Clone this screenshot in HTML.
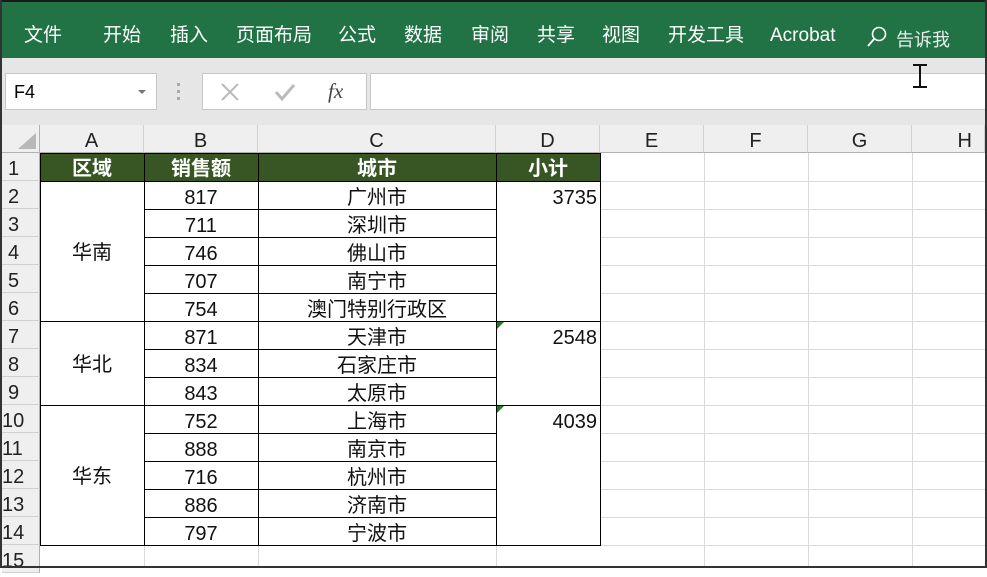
<!DOCTYPE html><html><head><meta charset="utf-8"><style>
*{margin:0;padding:0;box-sizing:border-box}
body{width:987px;height:568px;overflow:hidden;background:#fff;position:relative;font-family:"Liberation Sans","Noto Sans CJK SC",sans-serif}
.a{position:absolute}
.rib{left:0;top:0;width:987px;height:58px;background:#217346;border:2px solid #1a1a1a;border-bottom:none}
.rib span{position:absolute;top:22px;color:#fff;font-size:19px;line-height:24px}
.tb{left:0;top:58px;width:987px;height:67px;background:#e6e6e6}
.box{background:#fff;border:1px solid #c6c6c6}
.ch{top:125px;height:28px;background:#efefef;border-right:1px solid #d0d0d0;border-bottom:1px solid #b0b0b0;text-align:center;font-size:20px;line-height:32px;color:#222}
.rh{left:2px;width:38px;height:28px;background:#efefef;border-bottom:1px solid #d0d0d0;border-right:1px solid #b0b0b0;font-size:20px;line-height:32px;color:#222;padding-left:6px}
.gv{top:153px;width:1px;height:415px;background:#d9d9d9}
.gh{left:40px;width:945px;height:1px;background:#d9d9d9}
.bv{top:153px;width:1px;height:393px;background:#000}
.bh{height:1px;background:#000}
.t{font-size:20px;line-height:32px;text-align:center;color:#111}
</style></head><body>
<div class="a rib">
<span style="left:22px">文件</span><span style="left:101px">开始</span><span style="left:168px">插入</span><span style="left:234px">页面布局</span><span style="left:336px">公式</span><span style="left:402px">数据</span><span style="left:469px">审阅</span><span style="left:535px">共享</span><span style="left:600px">视图</span><span style="left:666px">开发工具</span><span style="left:768px">Acrobat</span>
<svg class="a" style="left:864px;top:24px" width="22" height="22"><circle cx="13" cy="8" r="6.5" fill="none" stroke="#fff" stroke-width="1.6"/><line x1="8.5" y1="12.5" x2="2" y2="20" stroke="#fff" stroke-width="1.8"/></svg>
<span style="left:894px;top:26px;font-size:18px;color:#e8f0ea">告诉我</span>
</div>
<div class="a tb"></div>
<div class="a box" style="left:5px;top:73px;width:152px;height:37px;font-size:18px;line-height:37px;padding-left:8px">F4</div>
<div class="a" style="left:138px;top:90px;width:0;height:0;border-left:4px solid transparent;border-right:4px solid transparent;border-top:4px solid #777"></div>
<div class="a" style="left:177px;top:83px;width:3px;height:17px;border-left:3px dotted #aaa"></div>
<div class="a box" style="left:202px;top:73px;width:165px;height:37px"></div>
<svg class="a" style="left:220px;top:82px" width="20" height="20"><path d="M2 2L18 18M18 2L2 18" stroke="#bbb" stroke-width="2"/></svg>
<svg class="a" style="left:274px;top:82px" width="22" height="20"><path d="M2 10L8 17L20 3" fill="none" stroke="#bbb" stroke-width="3"/></svg>
<div class="a" style="left:328px;top:79px;font-size:21px;font-style:italic;font-family:'Liberation Serif',serif;color:#444">fx</div>
<div class="a box" style="left:370px;top:73px;width:617px;height:37px"></div>
<div class="a" style="left:913px;top:64px;width:14px;height:24px;border-top:2px solid #111;border-bottom:2px solid #111"><div class="a" style="left:6px;top:0;width:2px;height:20px;background:#111"></div></div>
<div class="a" style="left:0;top:125px;width:40px;height:28px;background:#efefef;border-right:1px solid #b0b0b0;border-bottom:1px solid #b0b0b0"></div>
<svg class="a" style="left:16px;top:131px" width="22" height="20"><polygon points="20,2 20,18 2,18" fill="#b8b8b8"/></svg>
<div class="a ch" style="left:40px;width:104px">A</div><div class="a ch" style="left:144px;width:114px">B</div><div class="a ch" style="left:258px;width:238px">C</div><div class="a ch" style="left:496px;width:104px">D</div><div class="a ch" style="left:600px;width:104px">E</div><div class="a ch" style="left:704px;width:104px">F</div><div class="a ch" style="left:808px;width:104px">G</div><div class="a ch" style="left:912px;width:73px;text-align:right;padding-right:12px">H</div>
<div class="a rh" style="top:153px">1</div><div class="a rh" style="top:181px">2</div><div class="a rh" style="top:209px">3</div><div class="a rh" style="top:237px">4</div><div class="a rh" style="top:265px">5</div><div class="a rh" style="top:293px">6</div><div class="a rh" style="top:321px">7</div><div class="a rh" style="top:349px">8</div><div class="a rh" style="top:377px">9</div><div class="a rh" style="top:405px;padding-left:0">10</div><div class="a rh" style="top:433px;padding-left:0">11</div><div class="a rh" style="top:461px;padding-left:0">12</div><div class="a rh" style="top:489px;padding-left:0">13</div><div class="a rh" style="top:517px;padding-left:0">14</div><div class="a rh" style="top:545px;padding-left:0">15</div>
<div class="a gv" style="left:704px"></div><div class="a gv" style="left:808px"></div><div class="a gv" style="left:912px"></div>
<div class="a gv" style="left:144px;top:545px;height:23px"></div><div class="a gv" style="left:258px;top:545px;height:23px"></div><div class="a gv" style="left:496px;top:545px;height:23px"></div>
<div class="a gh" style="top:181px"></div><div class="a gh" style="top:209px"></div><div class="a gh" style="top:237px"></div><div class="a gh" style="top:265px"></div><div class="a gh" style="top:293px"></div><div class="a gh" style="top:321px"></div><div class="a gh" style="top:349px"></div><div class="a gh" style="top:377px"></div><div class="a gh" style="top:405px"></div><div class="a gh" style="top:433px"></div><div class="a gh" style="top:461px"></div><div class="a gh" style="top:489px"></div><div class="a gh" style="top:517px"></div><div class="a gh" style="top:545px"></div>
<div class="a" style="left:40px;top:182px;width:104px;height:363px;background:#fff"></div>
<div class="a" style="left:497px;top:182px;width:103px;height:363px;background:#fff"></div>
<div class="a" style="left:40px;top:153px;width:560px;height:28px;background:#375623"></div>
<div class="a t" style="left:40px;top:153px;width:104px;color:#fff;font-weight:bold">区域</div><div class="a t" style="left:144px;top:153px;width:114px;color:#fff;font-weight:bold">销售额</div><div class="a t" style="left:258px;top:153px;width:238px;color:#fff;font-weight:bold">城市</div><div class="a t" style="left:496px;top:153px;width:104px;color:#fff;font-weight:bold">小计</div>
<div class="a bh" style="left:144px;width:352px;top:209px"></div><div class="a bh" style="left:144px;width:352px;top:237px"></div><div class="a bh" style="left:144px;width:352px;top:265px"></div><div class="a bh" style="left:144px;width:352px;top:293px"></div><div class="a bh" style="left:144px;width:352px;top:349px"></div><div class="a bh" style="left:144px;width:352px;top:377px"></div><div class="a bh" style="left:144px;width:352px;top:433px"></div><div class="a bh" style="left:144px;width:352px;top:461px"></div><div class="a bh" style="left:144px;width:352px;top:489px"></div><div class="a bh" style="left:144px;width:352px;top:517px"></div>
<div class="a bh" style="left:40px;width:560px;top:153px"></div><div class="a bh" style="left:40px;width:560px;top:181px"></div><div class="a bh" style="left:40px;width:560px;top:321px"></div><div class="a bh" style="left:40px;width:560px;top:405px"></div><div class="a bh" style="left:40px;width:560px;top:545px"></div>
<div class="a bv" style="left:40px"></div><div class="a bv" style="left:144px"></div><div class="a bv" style="left:258px"></div><div class="a bv" style="left:496px"></div><div class="a bv" style="left:600px"></div>
<div class="a t" style="left:40px;top:237px;width:104px">华南</div><div class="a t" style="left:40px;top:349px;width:104px">华北</div><div class="a t" style="left:40px;top:461px;width:104px">华东</div>
<div class="a t" style="left:144px;top:182px;width:114px">817</div><div class="a t" style="left:144px;top:210px;width:114px">711</div><div class="a t" style="left:144px;top:238px;width:114px">746</div><div class="a t" style="left:144px;top:266px;width:114px">707</div><div class="a t" style="left:144px;top:294px;width:114px">754</div><div class="a t" style="left:144px;top:322px;width:114px">871</div><div class="a t" style="left:144px;top:350px;width:114px">834</div><div class="a t" style="left:144px;top:378px;width:114px">843</div><div class="a t" style="left:144px;top:406px;width:114px">752</div><div class="a t" style="left:144px;top:434px;width:114px">888</div><div class="a t" style="left:144px;top:462px;width:114px">716</div><div class="a t" style="left:144px;top:490px;width:114px">886</div><div class="a t" style="left:144px;top:518px;width:114px">797</div>
<div class="a t" style="left:258px;top:182px;width:238px">广州市</div><div class="a t" style="left:258px;top:210px;width:238px">深圳市</div><div class="a t" style="left:258px;top:238px;width:238px">佛山市</div><div class="a t" style="left:258px;top:266px;width:238px">南宁市</div><div class="a t" style="left:258px;top:294px;width:238px">澳门特别行政区</div><div class="a t" style="left:258px;top:322px;width:238px">天津市</div><div class="a t" style="left:258px;top:350px;width:238px">石家庄市</div><div class="a t" style="left:258px;top:378px;width:238px">太原市</div><div class="a t" style="left:258px;top:406px;width:238px">上海市</div><div class="a t" style="left:258px;top:434px;width:238px">南京市</div><div class="a t" style="left:258px;top:462px;width:238px">杭州市</div><div class="a t" style="left:258px;top:490px;width:238px">济南市</div><div class="a t" style="left:258px;top:518px;width:238px">宁波市</div>
<div class="a t" style="left:496px;top:182px;width:101px;text-align:right">3735</div><div class="a t" style="left:496px;top:322px;width:101px;text-align:right">2548</div><div class="a t" style="left:496px;top:406px;width:101px;text-align:right">4039</div>
<div class="a" style="left:497px;top:322px;width:0;height:0;border-top:7px solid #1e7b1e;border-right:7px solid transparent"></div>
<div class="a" style="left:497px;top:406px;width:0;height:0;border-top:7px solid #1e7b1e;border-right:7px solid transparent"></div>
<div class="a" style="left:0;top:0;width:2px;height:568px;background:#333"></div>
<div class="a" style="left:985px;top:0;width:2px;height:568px;background:#333"></div>
<div class="a" style="left:0;top:566px;width:987px;height:2px;background:#333"></div>
</body></html>
